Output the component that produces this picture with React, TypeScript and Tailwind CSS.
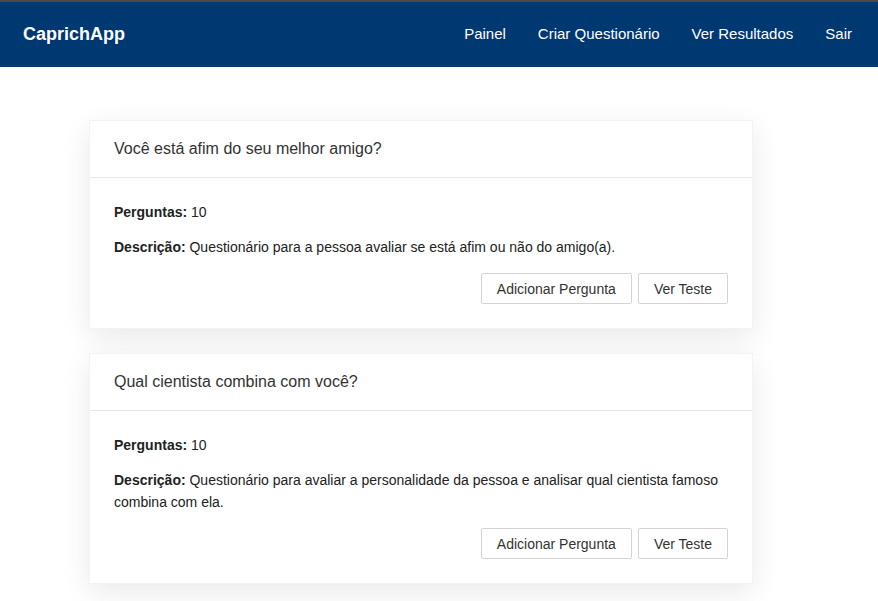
const questionarios = [
    {
        titulo: "Você está afim do seu melhor amigo?",
        perguntas: 10,
        descricao: "Questionário para a pessoa avaliar se está afim ou não do amigo(a).",
    },
    {
        titulo: "Qual cientista combina com você?",
        perguntas: 10,
        descricao: "Questionário para avaliar a personalidade da pessoa e analisar qual cientista famoso combina com ela.",
    },
];

function Navbar() {
    const links = ["Painel", "Criar Questionário", "Ver Resultados", "Sair"];
    return (
        <nav className="border-t-2 border-[#4a4a4a] bg-[#003872] h-[67px] flex items-center justify-between pl-[23px] pr-[26px]">
            <span className="text-white font-bold text-[18px]">CaprichApp</span>
            <ul className="flex items-center gap-[32px]">
                {links.map((l) => (
                    <li key={l} className="text-white text-[15px]">{l}</li>
                ))}
            </ul>
        </nav>
    );
}

function QuestionarioCard({ titulo, perguntas, descricao }: typeof questionarios[number]) {
    return (
        <div className="bg-white border border-[#f3f3f3] shadow-[0_8px_28px_rgba(0,0,0,0.09)]">
            <div className="h-[57px] flex items-center px-6 border-b border-[#e8e8e8]">
                <h2 className="text-[16px] text-[#333]">{titulo}</h2>
            </div>
            <div className="pt-[23px] pb-6 px-6 text-[14px] text-[#222] leading-[22px]">
                <p><b>Perguntas:</b> {perguntas}</p>
                <p className="mt-[13px]"><b>Descrição:</b> {descricao}</p>
                <div className="flex justify-end gap-[6px] mt-[15px]">
                    <button className="h-[31px] px-[15px] border border-[#d4d4d4] rounded-[2px] bg-white text-[#333] text-[14px]">
                        Adicionar Pergunta
                    </button>
                    <button className="h-[31px] px-[15px] border border-[#d4d4d4] rounded-[2px] bg-white text-[#333] text-[14px]">
                        Ver Teste
                    </button>
                </div>
            </div>
        </div>
    );
}

export default function App() {
    return (
        <div className="min-h-screen bg-white font-['Liberation_Sans',Arial,sans-serif]">
            <Navbar />
            <main className="ml-[89px] w-[664px] pt-[53px] flex flex-col gap-6">
                {questionarios.map((q) => (
                    <QuestionarioCard key={q.titulo} {...q} />
                ))}
            </main>
        </div>
    );
}
